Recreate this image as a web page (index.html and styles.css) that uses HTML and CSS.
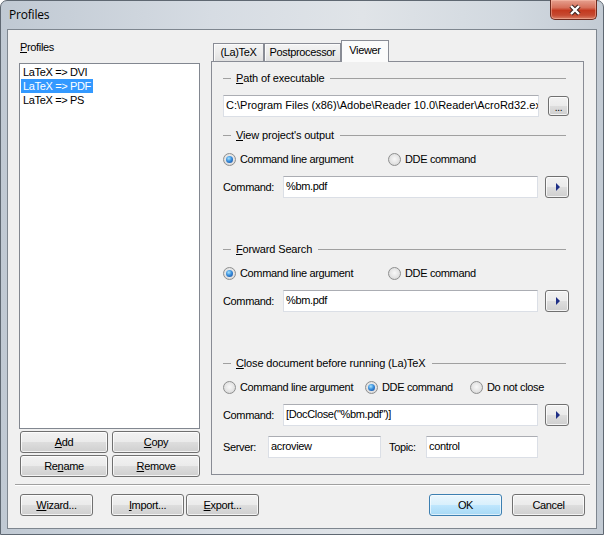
FILE: index.html
```html
<!DOCTYPE html>
<html lang="en">
<head>
    <meta charset="UTF-8">
    <title>Profiles</title>
    <link rel="stylesheet" href="styles.css">
</head>
<body>
<div class="window">
    <div class="titlebar">
        <span class="title">Profiles</span>
        <div class="close-btn">
            <svg width="14" height="12" viewBox="0 0 14 12">
                <path d="M3 2 L11 10 M11 2 L3 10" stroke="#3a2420" stroke-width="4.4" fill="none"/>
                <path d="M3 2 L11 10 M11 2 L3 10" stroke="#ffffff" stroke-width="2.4" fill="none"/>
            </svg>
        </div>
    </div>

    <div class="client">
        <div class="main">
            <!-- profile list -->
            <div class="profiles">
                <div class="caption"><u>P</u>rofiles</div>
                <div class="listbox">
                    <div class="item">LaTeX =&gt; DVI</div>
                    <div class="item selected">LaTeX =&gt; PDF</div>
                    <div class="item">LaTeX =&gt; PS</div>
                </div>
                <div class="list-buttons">
                    <button class="btn"><u>A</u>dd</button>
                    <button class="btn"><u>C</u>opy</button>
                    <button class="btn">Re<u>n</u>ame</button>
                    <button class="btn"><u>R</u>emove</button>
                </div>
            </div>

            <!-- tab control -->
            <div class="tabs">
                <div class="tab-strip">
                    <div class="tab tab-latex">(La)TeX</div>
                    <div class="tab tab-post">Postprocessor</div>
                    <div class="tab tab-viewer active">Viewer</div>
                </div>
                <div class="panel">
                    <div class="group">
                        <div class="group-title"><span class="dash"></span><span class="text"><u>P</u>ath of executable</span><span class="rule"></span></div>
                        <div class="row">
                            <div class="edit edit-path">C:\Program Files (x86)\Adobe\Reader 10.0\Reader\AcroRd32.exe</div>
                            <button class="btn btn-browse">...</button>
                        </div>
                    </div>

                    <div class="group group-view">
                        <div class="group-title"><span class="dash"></span><span class="text"><u>V</u>iew project's output</span><span class="rule"></span></div>
                        <div class="radio-row">
                            <span class="radio-item w165"><span class="radio checked"></span>Command line argument</span>
                            <span class="radio-item"><span class="radio"></span>DDE command</span>
                        </div>
                        <div class="row">
                            <span class="label">Command:</span>
                            <div class="edit edit-cmd">%bm.pdf</div>
                            <button class="btn btn-arrow"><span class="tri"></span></button>
                        </div>
                    </div>

                    <div class="group group-far">
                        <div class="group-title"><span class="dash"></span><span class="text"><u>F</u>orward Search</span><span class="rule"></span></div>
                        <div class="radio-row">
                            <span class="radio-item w165"><span class="radio checked"></span>Command line argument</span>
                            <span class="radio-item"><span class="radio"></span>DDE command</span>
                        </div>
                        <div class="row">
                            <span class="label">Command:</span>
                            <div class="edit edit-cmd">%bm.pdf</div>
                            <button class="btn btn-arrow"><span class="tri"></span></button>
                        </div>
                    </div>

                    <div class="group group-far">
                        <div class="group-title"><span class="dash"></span><span class="text"><u>C</u>lose document before running (La)TeX</span><span class="rule"></span></div>
                        <div class="radio-row">
                            <span class="radio-item w142"><span class="radio"></span>Command line argument</span>
                            <span class="radio-item w105"><span class="radio checked"></span>DDE command</span>
                            <span class="radio-item"><span class="radio"></span>Do not close</span>
                        </div>
                        <div class="row">
                            <span class="label">Command:</span>
                            <div class="edit edit-cmd">[DocClose("%bm.pdf")]</div>
                            <button class="btn btn-arrow"><span class="tri"></span></button>
                        </div>
                        <div class="row">
                            <span class="label label-server">Server:</span>
                            <div class="edit edit-server">acroview</div>
                            <span class="label label-topic">Topic:</span>
                            <div class="edit edit-topic">control</div>
                        </div>
                    </div>
                </div>
            </div>
        </div>

        <div class="separator"></div>

        <div class="footer">
            <button class="btn btn-wide btn-wizard"><u>W</u>izard...</button>
            <button class="btn btn-wide btn-import"><u>I</u>mport...</button>
            <button class="btn btn-wide"><u>E</u>xport...</button>
            <button class="btn btn-wide btn-default btn-ok">OK</button>
            <button class="btn btn-wide btn-cancel">Cancel</button>
        </div>
    </div>
</div>
</body>
</html>
```

FILE: styles.css
```css
body {
    margin: 0;
    background: #ffffff;
    font-family: "Liberation Sans", Arial, sans-serif;
    font-size: 11px;
    letter-spacing: -0.35px;
    color: #000;
}

.window {
    width: 604px;
    height: 535px;
    box-sizing: border-box;
    border: 1px solid #5f6872;
    border-radius: 7px 7px 0 0;
    padding: 0 6px 5px 6px;
    display: flex;
    flex-direction: column;
    background: linear-gradient(to right, #c0c9d3 0%, #d6dce3 35%, #e0e4e8 60%, #d1d8df 85%, #c3cbd4 100%);
}

.titlebar {
    height: 28px;
    display: flex;
    justify-content: space-between;
    align-items: flex-start;
    padding-left: 2px;
}

.title {
    font-family: "Open Sans", "Liberation Sans", sans-serif;
    font-size: 12px;
    letter-spacing: -0.2px;
    line-height: 14px;
    margin-top: 7px;
}

.close-btn {
    width: 47px;
    height: 20px;
    margin-top: -1px;
    box-sizing: border-box;
    border: 1px solid #6e2a1e;
    border-top: none;
    border-radius: 0 0 5px 5px;
    background: linear-gradient(#e6a08f 0%, #d6705a 40%, #c3391f 55%, #c64a31 80%, #d97f67 100%);
    box-shadow: inset 0 0 0 1px rgba(255, 200, 180, 0.45);
    display: flex;
    align-items: center;
    justify-content: center;
    padding-left: 2px;
}

.client {
    flex: 1;
    border: 1px solid #7e868f;
    background: #f0f0f0;
    display: flex;
    flex-direction: column;
}

.main {
    display: flex;
    gap: 11px;
    padding: 10px 12px 0 11px;
}

/* left side */
.profiles {
    width: 181px;
}

.caption {
    height: 14px;
    line-height: 14px;
    margin-bottom: 9px;
    padding-left: 1px;
}

.listbox {
    height: 366px;
    box-sizing: border-box;
    border: 1px solid #828790;
    background: #fff;
    padding: 1px;
}

.item {
    width: fit-content;
    line-height: 14px;
    padding: 0 2px;
}

.item.selected {
    background: #3399ff;
    color: #fff;
}

.list-buttons {
    display: grid;
    grid-template-columns: 88px 88px;
    grid-auto-rows: 22px;
    gap: 2px 4px;
    margin-top: 2px;
    padding-left: 1px;
}

/* buttons */
.btn {
    box-sizing: border-box;
    height: 22px;
    padding: 0;
    border: 1px solid #707070;
    border-radius: 3px;
    background: linear-gradient(#f2f2f2 0%, #ebebeb 48%, #dddddd 52%, #cfcfcf 100%);
    box-shadow: inset 0 0 0 1px rgba(255, 255, 255, 0.75);
    font-family: inherit;
    font-size: 11px;
    letter-spacing: inherit;
    color: #000;
}

.btn-default {
    border-color: #3c7fb1;
    background: linear-gradient(#eaf6fd 0%, #d9f0fc 48%, #bee6fd 52%, #a7d9f5 100%);
    box-shadow: inset 0 0 0 1px rgba(255, 255, 255, 0.6);
}

.btn-browse {
    width: 21px;
    height: 20px;
    margin-left: 9px;
    line-height: 22px;
    font-size: 10px;
}

.btn-arrow {
    width: 24px;
    margin-left: 7px;
    display: flex;
    align-items: center;
    justify-content: center;
}

.tri {
    width: 0;
    height: 0;
    border-left: 4px solid #1e2f86;
    border-top: 4px solid transparent;
    border-bottom: 4px solid transparent;
    margin-left: 1px;
}

/* tabs */
.tabs {
    width: 373px;
    display: flex;
    flex-direction: column;
}

.tab-strip {
    height: 21px;
    display: flex;
    align-items: flex-end;
    padding-left: 2px;
}

.tab {
    box-sizing: border-box;
    height: 18px;
    border: 1px solid #898c95;
    border-bottom: none;
    background: linear-gradient(#f4f4f4 0%, #ececec 50%, #e0e0e0 100%);
    box-shadow: inset 1px 1px 0 #fbfbfb;
    text-align: center;
    line-height: 16px;
}

.tab-latex { width: 51px; }
.tab-post { width: 77px; }

.tab-viewer.active {
    width: 48px;
    height: 22px;
    margin-bottom: -1px;
    background: #fbfbfb;
    box-shadow: none;
    position: relative;
    z-index: 1;
    line-height: 18px;
}

.panel {
    height: 414px;
    box-sizing: border-box;
    border: 1px solid #898c95;
    background: #f0f0f0;
    padding: 9px 14px 0 11px;
}

.group {
    display: flex;
    flex-direction: column;
    gap: 10px;
}

.group-view { margin-top: 11px; }
.group-far { margin-top: 44px; }

.group-title {
    height: 14px;
    display: flex;
    align-items: center;
}

.dash {
    width: 8px;
    height: 1px;
    background: #a0a0a0;
}

.group-title .text {
    margin: 0 6px 0 5px;
    line-height: 14px;
    letter-spacing: -0.15px;
}

.rule {
    flex: 1;
    height: 1px;
    background: #a0a0a0;
    margin-right: 3px;
}

.row {
    display: flex;
    align-items: center;
    height: 22px;
}

.radio-row {
    height: 14px;
    display: flex;
    align-items: center;
}

.radio-item {
    display: flex;
    align-items: center;
    gap: 4px;
}

.w165 { width: 165px; }
.w142 { width: 142px; }
.w105 { width: 105px; }

.radio {
    width: 13px;
    height: 13px;
    box-sizing: border-box;
    border-radius: 50%;
    border: 1px solid #8e8f8f;
    background: radial-gradient(circle at 50% 45%, #f8f8f8 0%, #e4e4e4 55%, #cccccc 100%);
    position: relative;
}

.radio.checked::after {
    content: '';
    position: absolute;
    left: 2px;
    top: 2px;
    width: 7px;
    height: 7px;
    border-radius: 50%;
    background: radial-gradient(circle at 40% 35%, #a6e4ff 0%, #3a8fdc 45%, #0b3f98 100%);
}

/* edits */
.edit {
    box-sizing: border-box;
    height: 22px;
    border: 1px solid #dbdfe6;
    border-top-color: #abadb3;
    background: #fff;
    padding: 0 2px;
    line-height: 19px;
    white-space: nowrap;
    overflow: hidden;
}

.edit-path { width: 316px; letter-spacing: 0; }
.edit-cmd { width: 255px; }
.edit-server { width: 113px; }
.edit-topic { width: 112px; }

.label { width: 60px; }
.label-server { width: 45px; }
.label-topic { width: 37px; margin-left: 8px; }

/* bottom */
.separator {
    height: 1px;
    margin: 7px 6px 0 7px;
    background: #a0a0a0;
    border-bottom: 1px solid #ffffff;
}

.footer {
    display: flex;
    padding: 8px 11px 0 12px;
}

.btn-wide { width: 73px; }
.btn-wizard { margin-right: 18px; }
.btn-import { margin-right: 2px; }
.btn-ok { margin-left: auto; }
.btn-cancel { margin-left: 10px; }
```
